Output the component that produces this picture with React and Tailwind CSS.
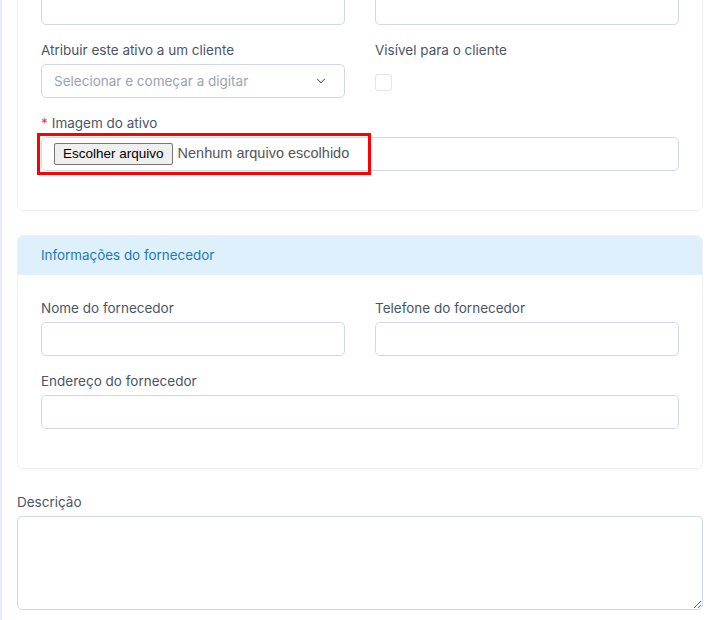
import { ChevronDown } from 'lucide-react';

const font = { fontFamily: 'Inter, "Noto Sans", sans-serif' };

function Label({ children, required }) {
  return (
    <label className="block h-5 text-[13.5px] leading-5 text-[#4a5568] mb-[4px]">
      {required && <span className="text-[#e53e3e] mr-1">*</span>}
      {children}
    </label>
  );
}

function TextInput() {
  return <input type="text" className="block w-full h-[34px] rounded-[5px] border border-[#cfd8e3] bg-white px-3 outline-none" />;
}

function Field({ label, required, children }) {
  return (
    <div className="mb-[15px]">
      <Label required={required}>{label}</Label>
      {children}
    </div>
  );
}

export default function App() {
  return (
    <div className="min-h-[620px] bg-white border-l-2 border-[#e6edf6] pl-[15px] pr-4 overflow-hidden" style={font}>
      {/* Ativo card (scrolled, top is cut off) */}
      <div className="-mt-[51px] rounded-[6px] border border-[#eef1f4] px-[23px] pb-6">
        <div className="grid grid-cols-2 gap-x-[30px]">
          <div className="mb-[15px]">
            <div className="h-[75px] rounded-[5px] border border-[#cfd8e3] bg-white" />
          </div>
          <div className="mb-[15px]">
            <div className="h-[75px] rounded-[5px] border border-[#cfd8e3] bg-white" />
          </div>

          <Field label="Atribuir este ativo a um cliente">
            <div className="flex h-[34px] items-center justify-between rounded-[5px] border border-[#cfd8e3] bg-white pl-3 pr-4">
              <span className="text-[13.5px] text-[#97a3b6]">Selecionar e começar a digitar</span>
              <ChevronDown size={14} strokeWidth={1.75} className="text-[#4a5568]" />
            </div>
          </Field>
          <Field label="Visível para o cliente">
            <div className="pt-[10px]">
              <div className="h-[17px] w-[17px] rounded-[3px] border border-[#dfe5ec] bg-white" />
            </div>
          </Field>

          <div className="col-span-2">
            <Field label="Imagem do ativo" required>
              <div className="relative">
                <div className="flex h-[34px] items-center rounded-[5px] border border-[#cfd8e3] bg-white pl-3" style={{ fontFamily: '"Liberation Sans", Arial, sans-serif' }}>
                  <button className="h-[22px] rounded-[2px] border border-[#767676] bg-[#efefef] px-[8px] text-[13.5px] leading-none text-black">
                    Escolher arquivo
                  </button>
                  <span className="ml-[5px] text-[14.5px] text-[#555]">Nenhum arquivo escolhido</span>
                </div>
                <div className="pointer-events-none absolute -left-[4px] -top-[4px] h-[42px] w-[334px] border-[3px] border-[#ff0000]" />
              </div>
            </Field>
          </div>
        </div>
      </div>

      {/* Fornecedor card */}
      <div className="mt-[24px] overflow-hidden rounded-[6px] border border-[#eef1f4]">
        <div className="flex h-[39px] items-center bg-[#dff0fd] px-[23px] text-[13.4px] text-[#2179b5]">
          Informações do fornecedor
        </div>
        <div className="px-[23px] pt-[23px] pb-6">
          <div className="grid grid-cols-2 gap-x-[30px]">
            <Field label="Nome do fornecedor">
              <TextInput />
            </Field>
            <Field label="Telefone do fornecedor">
              <TextInput />
            </Field>
            <div className="col-span-2">
              <Field label="Endereço do fornecedor">
                <TextInput />
              </Field>
            </div>
          </div>
        </div>
      </div>

      <div className="mt-[23px]">
        <Label>Descrição</Label>
        <textarea className="block h-[94px] w-full rounded-[5px] border border-[#cfd8e3] bg-white px-3 py-2 outline-none" />
      </div>
    </div>
  );
}
